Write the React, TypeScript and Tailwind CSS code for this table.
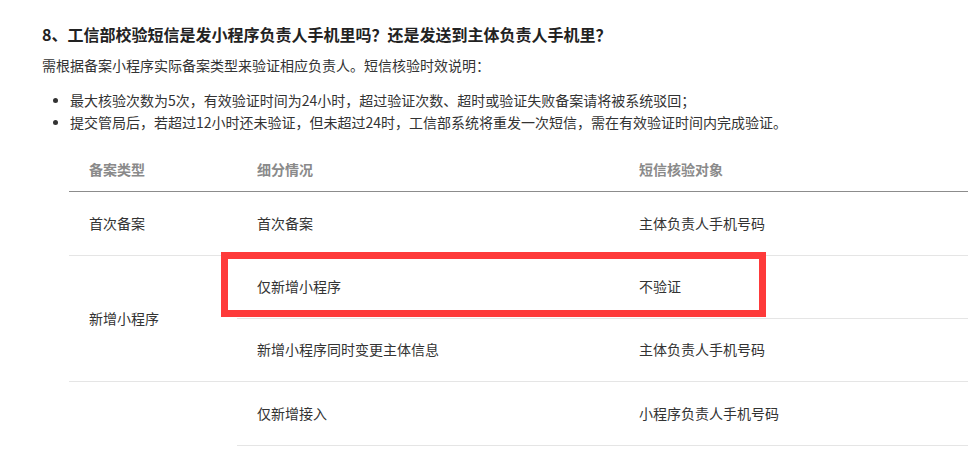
const rows = [
  { type: '首次备案', span: 1, detail: '首次备案', target: '主体负责人手机号码' },
  { type: '新增小程序', span: 2, detail: '仅新增小程序', target: '不验证' },
  { type: null, span: 0, detail: '新增小程序同时变更主体信息', target: '主体负责人手机号码' },
  { type: '', span: 1, detail: '仅新增接入', target: '小程序负责人手机号码' },
];

export default function App() {
  return (
    <div
      className="h-[463px] w-[968px] overflow-hidden bg-white pl-[42px] pt-[22px] text-[#333]"
      style={{ fontFamily: '"Noto Sans CJK SC", "Noto Sans", sans-serif' }}
    >
      <h3 className="text-[16px] leading-[24px] font-bold text-[#222]">
        8、工信部校验短信是发小程序负责人手机里吗？还是发送到主体负责人手机里？
      </h3>
      <p className="mt-[8px] text-[14px] leading-[22px]">
        需根据备案小程序实际备案类型来验证相应负责人。短信核验时效说明：
      </p>
      <ul className="mt-[13px] text-[14px] leading-[22px]">
        <li className="flex items-center">
          <span className="ml-[11px] mr-[12px] h-[5px] w-[5px] shrink-0 rounded-full bg-[#333]" />
          最大核验次数为5次，有效验证时间为24小时，超过验证次数、超时或验证失败备案请将被系统驳回；
        </li>
        <li className="flex items-center">
          <span className="ml-[11px] mr-[12px] h-[5px] w-[5px] shrink-0 rounded-full bg-[#333]" />
          提交管局后，若超过12小时还未验证，但未超过24时，工信部系统将重发一次短信，需在有效验证时间内完成验证。
        </li>
      </ul>

      <div className="relative ml-[27px] mt-[15px]">
        <table className="w-[930px] table-fixed border-collapse text-left text-[14px]">
          <colgroup>
            <col className="w-[168px]" />
            <col className="w-[382px]" />
            <col />
          </colgroup>
          <thead>
            <tr className="h-[43px]">
              <th className="border-b border-[#8c8c8c] pl-[20px] font-bold text-[#8a8a8a]">备案类型</th>
              <th className="border-b border-[#8c8c8c] pl-[20px] font-bold text-[#8a8a8a]">细分情况</th>
              <th className="border-b border-[#8c8c8c] pl-[20px] font-bold text-[#8a8a8a]">短信核验对象</th>
            </tr>
          </thead>
          <tbody>
            {rows.map((r, i) => (
              <tr key={i} className={i === 0 || i === 3 ? 'h-[64px]' : 'h-[63px]'}>
                {r.type !== null && (
                  <td
                    rowSpan={r.span}
                    className={
                      r.type
                        ? 'border-b border-[#e5e5e5] pl-[20px] align-middle'
                        : 'pl-[20px] align-middle'
                    }
                  >
                    {r.type}
                  </td>
                )}
                <td className="border-b border-[#e5e5e5] pl-[20px]">{r.detail}</td>
                <td className="border-b border-[#e5e5e5] pl-[20px]">{r.target}</td>
              </tr>
            ))}
          </tbody>
        </table>
        {/* red highlight drawn over the 仅新增小程序 row */}
        <div className="pointer-events-none absolute left-[152px] top-[104px] h-[65px] w-[545px] border-[7px] border-[#fe3a3a]" />
      </div>
    </div>
  );
}
